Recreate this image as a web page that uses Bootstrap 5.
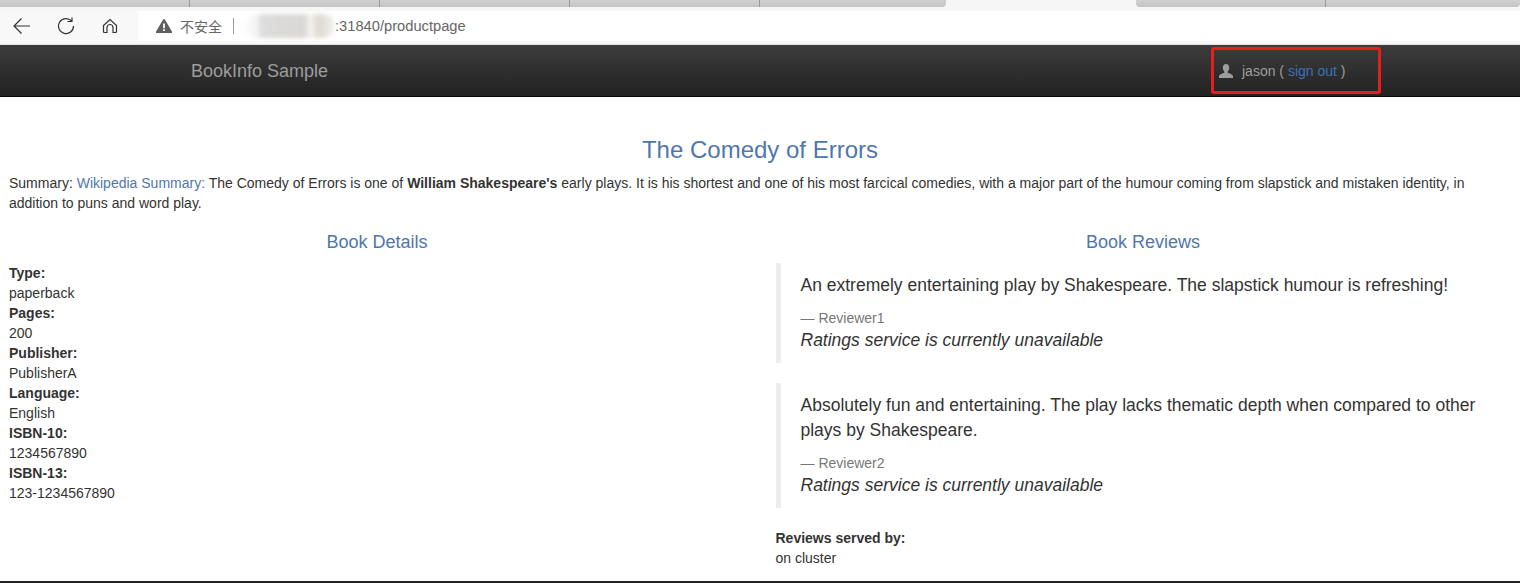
<!DOCTYPE html>
<html lang="en">
<head>
    <meta charset="UTF-8">
    <title>Simple Bookstore App</title>
    <link href="https://cdn.jsdelivr.net/npm/bootstrap@5.3.2/dist/css/bootstrap.min.css" rel="stylesheet">
    <style>
        html, body { height: 583px; overflow: hidden; }
        body { font-family: "Liberation Sans", Arial, sans-serif; font-size: 14px; line-height: 20px; color: #333; background: #fff; }
        .tab-strip { height: 10px; background: #f6f6f6; }
        .tab-group { height: 7px; }
        .tab-left { width: 946px; }
        .tab-right { width: 384px; }
        .tab-seg { height: 7px; background: linear-gradient(#d0d0d0, #c4c4c4); border-right: 1px solid #999; width: 190px; }
        .tab-seg:last-child { border-right: 0; border-bottom-right-radius: 4px; flex: 1; }
        .tab-right .tab-seg:first-child { border-bottom-left-radius: 4px; }
        .chrome-bar { height: 35px; padding-bottom: 2px; background: #f8f8f8; border-bottom: 1px solid #e2e2e2; }
        .chrome-btn { width: 44px; line-height: 0; }
        .addr-box { flex: 1; height: 30px; background: #fff; margin-left: 6px; font-size: 14.7px; color: #666; }
        .addr-warn { margin-left: 18px; margin-right: 8px; }
        .addr-zh { font-family: "Noto Sans CJK SC", sans-serif; font-size: 14px; color: #666; }
        .addr-sep { width: 1px; height: 16px; background: #999; margin: 0 11px 0 11px; }
        .addr-blur { width: 90px; height: 24px; border-radius: 12px; background: linear-gradient(90deg, #fafafa 0, #f3f3f3 14%, #dcdcdc 18%, #dad8d4 66%, #f4f4f4 72%, #ddd9d0 82%, #f2f2f2 100%); filter: blur(2px); }
        .bi-nav { height: 52px; background: linear-gradient(#3c3c3c, #222); border-bottom: 1px solid #080808; }
        .bi-brand { margin-left: 191px; font-size: 18px; color: #9d9d9d; }
        .user-box { margin-right: 139px; width: 170px; height: 47px; border: 3px solid #e3201b; border-radius: 3px; color: #9d9d9d; padding-left: 5px; }
        .user-box a { color: #3a72b5; text-decoration: none; }
        .user-name { margin-left: 1px; }
        .book-title { font-size: 24px; line-height: 26px; font-weight: 500; color: #4f77ae; text-align: center; margin: 40px 0 10px; }
        .sec-title { font-size: 18px; line-height: 20px; font-weight: 500; color: #4f77ae; text-align: center; margin: 0 0 11px; }
        .main-row { margin-top: 19px; }
        .summary { margin: 0 9px; }
        .summary a { color: #4f77ae; text-decoration: none; }
        .left-col { width: 745px; padding-left: 9px; flex: none; }
        .right-col { width: 735px; margin-left: 30.5px; flex: none; }
        .rv { border-left: 5px solid #eee; padding: 10px 20px; font-size: 17.5px; line-height: 25px; margin-bottom: 20px; }
        .rv small { display: block; font-size: 14px; line-height: 20px; color: #777; margin-top: 10px; }
        .rv em { display: block; color: #333; }
        .rv p { margin: 0; }
        .page-edge { height: 2px; background: #222; flex: none; }
    </style>
</head>
<body class="d-flex flex-column">
    <div class="tab-strip d-flex justify-content-between">
        <div class="tab-group tab-left d-flex">
            <div class="tab-seg"></div><div class="tab-seg"></div><div class="tab-seg"></div><div class="tab-seg"></div><div class="tab-seg"></div>
        </div>
        <div class="tab-group tab-right d-flex">
            <div class="tab-seg"></div><div class="tab-seg"></div>
        </div>
    </div>
    <div class="chrome-bar d-flex align-items-center">
        <div class="chrome-btn text-center"><svg width="18" height="18" viewBox="0 0 18 18" fill="none" stroke="#333" stroke-width="1.2"><path d="M17 9H1M8.500 1.500 1 9l7.500 7.500"/></svg></div>
        <div class="chrome-btn text-center"><svg width="18" height="18" viewBox="0 0 18 18" fill="none" stroke="#333" stroke-width="1.2"><path d="M14.500 4A7.500 7.500 0 1 0 16.500 9M15 .5V4.500h-4.500"/></svg></div>
        <div class="chrome-btn text-center"><svg width="16" height="16" viewBox="0 0 16 16" fill="none" stroke="#333" stroke-width="1.200"><path d="M1.500 7.500 8 1.500l6.500 6v6a1 1 0 0 1-1 1H11v-5a3 3 0 0 0-6 0v5H2.500a1 1 0 0 1-1-1z"/></svg></div>
        <div class="addr-box d-flex align-items-center">
            <svg class="addr-warn" width="16" height="14" viewBox="0 0 16 14"><path fill="#5f5f5f" fill-rule="evenodd" d="M8 0c.4 0 .7.2.9.5l7 12c.4.7 0 1.500-.9 1.500H1c-.9 0-1.300-.8-.9-1.500l7-12C7.300.2 7.600 0 8 0zM7.100 4.500v4.700h1.800V4.500zM7.100 10.200V12h1.800v-1.800z"/></svg>
            <span class="addr-zh">不安全</span>
            <span class="addr-sep"></span>
            <span class="addr-blur"></span>
            <span>:31840/productpage</span>
        </div>
    </div>
    <nav class="bi-nav d-flex align-items-center justify-content-between">
        <span class="bi-brand">BookInfo Sample</span>
        <div class="user-box d-flex align-items-center">
            <svg width="14" height="14" viewBox="0 0 14 14" class="me-2"><path fill="#9d9d9d" d="M7 0c2 0 3.200 1.500 3.200 3.600 0 1.600-.7 3-1.500 3.900v1.200C10 9.300 14 10 14 12.500V14H0v-1.500C0 10 4 9.300 5.300 8.700V7.500C4.500 6.600 3.800 5.200 3.800 3.600 3.800 1.500 5 0 7 0z"/></svg>
            <span class="user-name">jason ( <a href="#">sign out</a> )</span>
        </div>
    </nav>
    <h3 class="book-title">The Comedy of Errors</h3>
    <p class="summary mb-0">Summary: <a href="#">Wikipedia Summary:</a> The Comedy of Errors is one of <b>William Shakespeare's</b> early plays. It is his shortest and one of his most farcical comedies, with a major part of the humour coming from slapstick and mistaken identity, in addition to puns and word play.</p>
    <div class="d-flex main-row">
        <div class="left-col">
            <h4 class="sec-title">Book Details</h4>
            <dl class="mb-0">
                <dt>Type:</dt><dd class="mb-0">paperback</dd>
                <dt>Pages:</dt><dd class="mb-0">200</dd>
                <dt>Publisher:</dt><dd class="mb-0">PublisherA</dd>
                <dt>Language:</dt><dd class="mb-0">English</dd>
                <dt>ISBN-10:</dt><dd class="mb-0">1234567890</dd>
                <dt>ISBN-13:</dt><dd class="mb-0">123-1234567890</dd>
            </dl>
        </div>
        <div class="right-col">
            <h4 class="sec-title">Book Reviews</h4>
            <div class="rv">
                <p>An extremely entertaining play by Shakespeare. The slapstick humour is refreshing!</p>
                <small>— Reviewer1</small>
                <em>Ratings service is currently unavailable</em>
            </div>
            <div class="rv">
                <p>Absolutely fun and entertaining. The play lacks thematic depth when compared to other plays by Shakespeare.</p>
                <small>— Reviewer2</small>
                <em>Ratings service is currently unavailable</em>
            </div>
            <dl class="mb-0">
                <dt>Reviews served by:</dt>
                <dd class="mb-0">on cluster</dd>
            </dl>
        </div>
    </div>
    <div class="page-edge mt-auto"></div>
</body>
</html>
